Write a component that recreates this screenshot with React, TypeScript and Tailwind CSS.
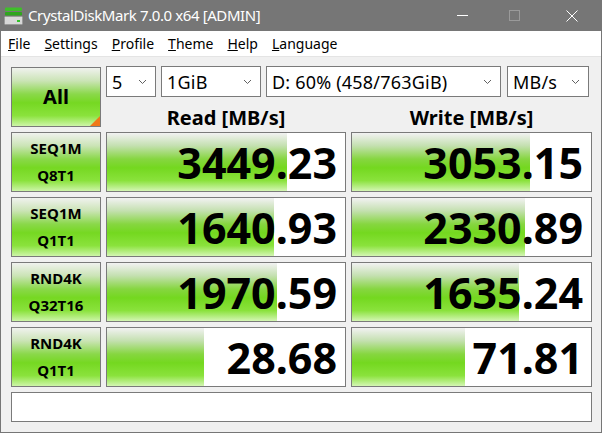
import React from "react";

const rows = [
  { a: "SEQ1M", b: "Q8T1", read: 3449.23, write: 3053.15 },
  { a: "SEQ1M", b: "Q1T1", read: 1640.93, write: 2330.89 },
  { a: "RND4K", b: "Q32T16", read: 1970.59, write: 1635.24 },
  { a: "RND4K", b: "Q1T1", read: 28.68, write: 71.81 },
];

// log scale bar, like the app does
const barWidth = (v: number) => Math.max(0, 97 + 39.9 * (Math.log10(v) - 1.4576));

function Chevron() {
  return (
    <svg width="9" height="6" viewBox="0 0 9 6" className="shrink-0">
      <polyline points="1,1 4.5,4.5 8,1" fill="none" stroke="#606060" strokeWidth="1" />
    </svg>
  );
}

function Combo({ text, w }: { text: string; w: string }) {
  return (
    <div className={`${w} h-[31px] bg-white border border-[#7a7a7a] flex items-center justify-between pl-[5px] pr-[8px]`}>
      <span className="text-[18px] text-black leading-none tracking-[0.2px]">{text}</span>
      <Chevron />
    </div>
  );
}

function Meter({ value }: { value: number }) {
  return (
    <div className="relative h-[60px] bg-white border border-[#7a7a7a] overflow-hidden">
      <div
        className="absolute left-0 top-0 bottom-0 bg-[linear-gradient(to_bottom,#f2f2f2_0%,#c4e0b0_22%,#86d640_45%,#74d81f_60%,#8ae23c_82%,#d4f6b4_100%)]"
        style={{ width: barWidth(value) }}
      />
      <div className="relative h-full flex items-center justify-end pr-[8px] text-[43px] font-bold leading-none text-black">
        {value.toFixed(2)}
      </div>
    </div>
  );
}

function Label({ a, b }: { a: string; b: string }) {
  return (
    <div className="h-[60px] border border-[#7a7a7a] bg-[linear-gradient(to_bottom,#f0f2ee_0%,#cbe4b6_22%,#8ad84a_45%,#76d822_60%,#8ae23c_82%,#cdf5a8_100%)] flex flex-col items-center justify-center text-[15px] font-bold text-black">
      <div className="leading-[27px]">{a}</div>
      <div className="leading-[27px]">{b}</div>
    </div>
  );
}

function AppIcon() {
  return (
    <svg width="19" height="18" viewBox="0 0 19 18">
      <rect x="1" y="0.5" width="17" height="3.5" rx="1" fill="#3fbf2a" />
      <rect x="1" y="5" width="17" height="3.5" rx="1" fill="#2fa61e" />
      <rect x="0.5" y="9.5" width="18" height="8" rx="1" fill="#d8d8d8" stroke="#9a9a9a" />
      <rect x="13" y="13" width="3" height="2" fill="#34c22a" />
    </svg>
  );
}

export default function App() {
  return (
    <div className="w-[602px] h-[433px] flex flex-col border border-[#767676] border-t-0 bg-[#f0f0f0] font-['Noto_Sans',sans-serif] overflow-hidden">
      <div className="h-[31px] bg-[#767676] flex items-center shrink-0">
        <div className="ml-[3px] mt-[1px]">
          <AppIcon />
        </div>
        <span className="ml-[5px] text-[15px] text-white leading-none tracking-[-0.4px]">CrystalDiskMark 7.0.0 x64 [ADMIN]</span>
        <div className="ml-auto flex items-center h-full">
          <div className="w-[46px] flex justify-center">
            <div className="w-[11px] h-[1px] bg-white" />
          </div>
          <div className="w-[58px] flex justify-center">
            <div className="w-[11px] h-[11px] border border-[#9a9a9a]" />
          </div>
          <div className="w-[58px] flex justify-center">
            <svg width="12" height="12" viewBox="0 0 12 12">
              <path d="M0.5 0.5 L11.5 11.5 M11.5 0.5 L0.5 11.5" stroke="white" strokeWidth="1" />
            </svg>
          </div>
        </div>
      </div>
      <div className="h-[26px] bg-white border-b border-[#e4e4e4] flex items-center pl-[7px] gap-[14px] text-[14px] text-black shrink-0">
        <span><span className="underline">F</span>ile</span>
        <span><span className="underline">S</span>ettings</span>
        <span><span className="underline">P</span>rofile</span>
        <span><span className="underline">T</span>heme</span>
        <span><span className="underline">H</span>elp</span>
        <span><span className="underline">L</span>anguage</span>
      </div>
      <div className="pl-[10px] pt-[9px] grid grid-cols-[90px_240px_241px] gap-x-[5px] gap-y-[5px]">
        <div className="relative mt-[1px] h-[60px] border border-[#7a7a7a] bg-[linear-gradient(to_bottom,#f0f2ee_0%,#cbe4b6_22%,#8ad84a_45%,#76d822_60%,#8ae23c_82%,#cdf5a8_100%)] flex items-center justify-center text-[20px] font-bold text-black">
          All
          <div className="absolute right-0 bottom-0 w-0 h-0 border-l-[10px] border-l-transparent border-b-[10px] border-b-[#f07818]" />
        </div>
        <div className="col-span-2 h-[61px] flex flex-col">
          <div className="flex">
            <Combo text="5" w="w-[50px]" />
            <div className="ml-[5px]"><Combo text="1GiB" w="w-[100px]" /></div>
            <div className="ml-[5px]"><Combo text="D: 60% (458/763GiB)" w="w-[235px]" /></div>
            <div className="ml-[6px]"><Combo text="MB/s" w="w-[82px]" /></div>
          </div>
          <div className="grid grid-cols-[240px_241px] gap-x-[5px] mt-[9px] text-[20px] font-bold text-black leading-[24px]">
            <div className="text-center">Read [MB/s]</div>
            <div className="text-center">Write [MB/s]</div>
          </div>
        </div>
        {rows.map((r, i) => (
          <React.Fragment key={i}>
            <Label a={r.a} b={r.b} />
            <Meter value={r.read} />
            <Meter value={r.write} />
          </React.Fragment>
        ))}
        <div className="col-span-3 h-[30px] bg-white border border-[#7a7a7a]" />
      </div>
    </div>
  );
}
